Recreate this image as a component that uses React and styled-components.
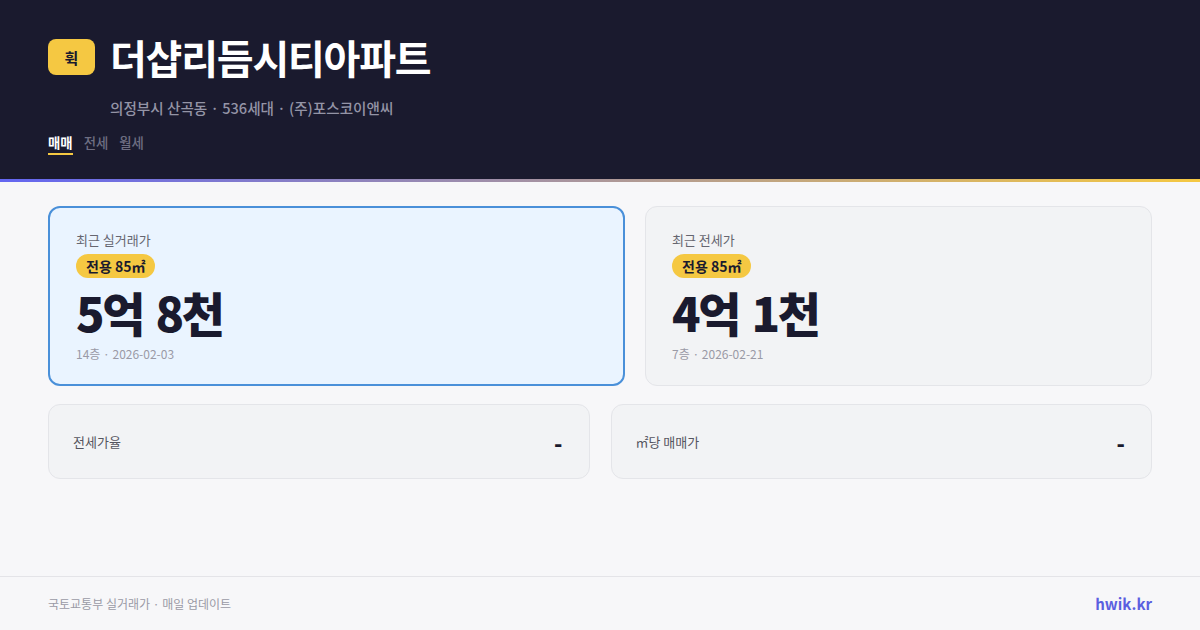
import styled, { createGlobalStyle } from "styled-components";

const GlobalStyle = createGlobalStyle`
  html, body {
    margin: 0;
    padding: 0;
    background: #f7f7f9;
  }
  body {
    font-family: "Noto Sans CJK KR", "Noto Sans", sans-serif;
  }
  * {
    box-sizing: border-box;
  }
`;

const tabs = [
  { label: "매매", active: true },
  { label: "전세" },
  { label: "월세" },
];

const prices = [
  {
    title: "최근 실거래가",
    area: "전용 85㎡",
    price: "5억 8천",
    meta: "14층 · 2026-02-03",
    highlight: true,
  },
  {
    title: "최근 전세가",
    area: "전용 85㎡",
    price: "4억 1천",
    meta: "7층 · 2026-02-21",
  },
];

const stats = [
  { label: "전세가율", value: "-" },
  { label: "㎡당 매매가", value: "-" },
];

const App = () => {
  return (
    <Page>
      <GlobalStyle />
      <Header>
        <TitleRow>
          <Logo>휙</Logo>
          <Title>더샵리듬시티아파트</Title>
        </TitleRow>
        <Subtitle>의정부시 산곡동 · 536세대 · (주)포스코이앤씨</Subtitle>
        <Tabs>
          {tabs.map((t) => (
            <Tab key={t.label} $active={t.active}>
              {t.label}
            </Tab>
          ))}
        </Tabs>
      </Header>
      <AccentLine />
      <Main>
        <PriceGrid>
          {prices.map((p) => (
            <PriceCard key={p.title} $highlight={p.highlight}>
              <CardLabel>{p.title}</CardLabel>
              <AreaPill>{p.area}</AreaPill>
              <Price>{p.price}</Price>
              <Meta>{p.meta}</Meta>
            </PriceCard>
          ))}
        </PriceGrid>
        <StatGrid>
          {stats.map((s) => (
            <StatCard key={s.label}>
              <StatLabel>{s.label}</StatLabel>
              <StatValue>{s.value}</StatValue>
            </StatCard>
          ))}
        </StatGrid>
      </Main>
      <Footer>
        <FooterText>국토교통부 실거래가 · 매일 업데이트</FooterText>
        <Brand>hwik.kr</Brand>
      </Footer>
    </Page>
  );
};

const Page = styled.div`
  display: flex;
  flex-direction: column;
  min-height: 100vh;
  background: #f7f7f9;
`;

const Header = styled.header`
  background: #1a1a2e;
  padding: 33px 48px 24px;
`;

const TitleRow = styled.div`
  display: flex;
  align-items: center;
  gap: 15px;
`;

const Logo = styled.div`
  width: 47px;
  height: 36px;
  border-radius: 8px;
  background: #f5c842;
  color: #1a1a2e;
  font-size: 15px;
  font-weight: 700;
  display: flex;
  align-items: center;
  justify-content: center;
`;

const Title = styled.h1`
  margin: 0;
  color: #ffffff;
  font-size: 40px;
  font-weight: 700;
  line-height: 48px;
  letter-spacing: -1.2px;
`;

const Subtitle = styled.div`
  margin: 16px 0 0 62px;
  color: #9494a6;
  font-size: 14.6px;
  font-weight: 500;
  line-height: 21px;
`;

const Tabs = styled.nav`
  display: flex;
  gap: 11px;
  margin-top: 15px;
`;

const Tab = styled.span`
  font-size: 13.4px;
  line-height: 18px;
  padding-bottom: 2px;
  font-weight: ${(p) => (p.$active ? 700 : 500)};
  color: ${(p) => (p.$active ? "#ffffff" : "#6e6e82")};
  border-bottom: 2px solid ${(p) => (p.$active ? "#f5c842" : "transparent")};
`;

const AccentLine = styled.div`
  height: 3px;
  background: linear-gradient(90deg, #6366f1, #f5c842);
`;

const Main = styled.main`
  padding: 24px 48px;
  display: flex;
  flex-direction: column;
  gap: 18px;
`;

const PriceGrid = styled.div`
  display: grid;
  grid-template-columns: 577fr 507fr;
  gap: 20px;
`;

const PriceCard = styled.div`
  display: flex;
  flex-direction: column;
  align-items: flex-start;
  border-radius: 12px;
  padding: ${(p) => (p.$highlight ? "23px 26px 22px" : "24px 26px 23px")};
  background: ${(p) => (p.$highlight ? "#eaf4ff" : "#f2f3f5")};
  border: ${(p) => (p.$highlight ? "2px solid #4a90d9" : "1px solid #e4e5e9")};
`;

const CardLabel = styled.div`
  font-size: 13px;
  line-height: 18px;
  color: #666670;
`;

const AreaPill = styled.span`
  margin-top: 5px;
  height: 24px;
  padding: 0 10px;
  border-radius: 12px;
  background: #f5c842;
  color: #1a1a2e;
  font-size: 14px;
  font-weight: 700;
  display: flex;
  align-items: center;
`;

const Price = styled.div`
  margin-top: 7px;
  font-size: 47px;
  font-weight: 900;
  line-height: 54px;
  letter-spacing: -2.4px;
  word-spacing: 4px;
  color: #1a1a2e;
`;

const Meta = styled.div`
  margin-top: 6px;
  font-size: 12px;
  line-height: 17px;
  color: #9a9aa6;
`;

const StatGrid = styled.div`
  display: grid;
  grid-template-columns: 1fr 1fr;
  gap: 21px;
`;

const StatCard = styled.div`
  height: 75px;
  padding: 0 26px 0 24px;
  display: flex;
  align-items: center;
  justify-content: space-between;
  background: #f2f3f5;
  border: 1px solid #e4e5e9;
  border-radius: 12px;
`;

const StatLabel = styled.span`
  font-size: 13px;
  color: #55555f;
`;

const StatValue = styled.span`
  font-size: 22px;
  font-weight: 900;
  color: #1a1a2e;
`;

const Footer = styled.footer`
  margin-top: auto;
  height: 54px;
  padding: 0 48px;
  border-top: 1px solid #e4e4e8;
  display: flex;
  align-items: center;
  justify-content: space-between;
`;

const FooterText = styled.span`
  font-size: 12px;
  color: #9a9aa6;
`;

const Brand = styled.span`
  font-size: 15px;
  font-weight: 700;
  color: #5b5fe0;
`;

export default App;
